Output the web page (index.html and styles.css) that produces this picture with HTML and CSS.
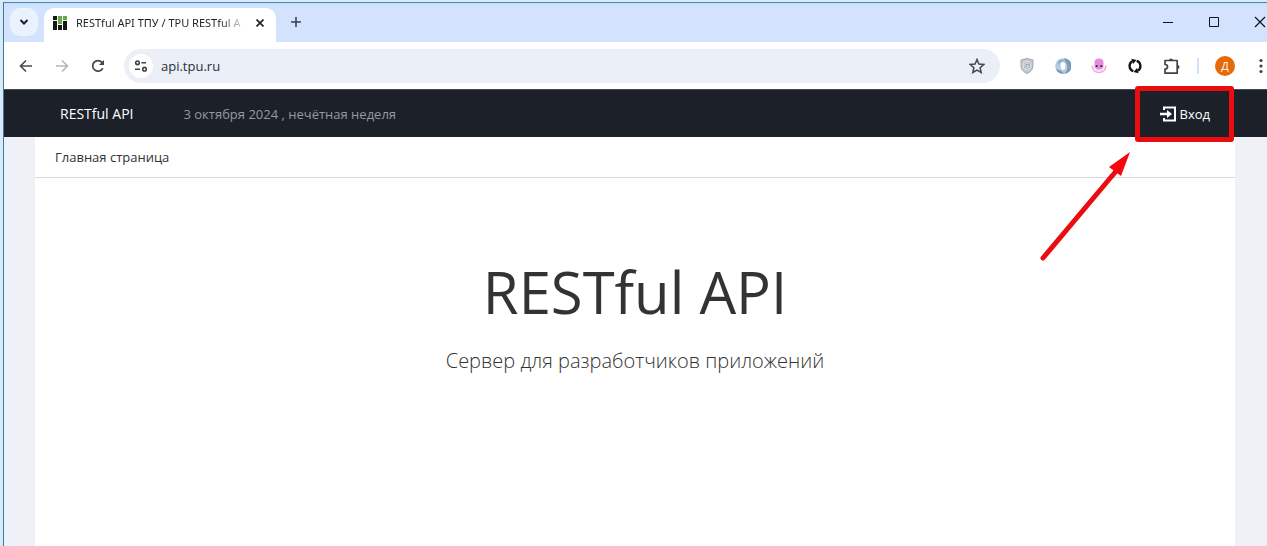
FILE: index.html
```html
<!DOCTYPE html>
<html lang="ru">
<head>
<meta charset="utf-8">
<title>RESTful API ТПУ / TPU RESTful API</title>
<link rel="stylesheet" href="styles.css">
</head>
<body>
<div class="window">
  <div class="tabstrip">
    <button class="tab-search" aria-label="Поиск вкладок">
      <svg width="12" height="12" viewBox="0 0 12 12"><path d="M2.5 4l3.500 3.500L9.500 4" fill="none" stroke="#1c2430" stroke-width="2"/></svg>
    </button>
    <div class="tab">
      <svg class="favicon" width="14" height="14" viewBox="0 0 14 14"><path fill="#151a17" d="M0 5h4v9H0zM5 9h4v5H5zM10 5h4v9h-4zM0 0h4v4H0z"/><path fill="#68a848" d="M5 0h4v8H5zM10 0h4v4h-4z"/></svg>
      <span class="tab-title">RESTful API ТПУ / TPU RESTful A</span>
      <button class="tab-close" aria-label="Закрыть вкладку">
        <svg width="8" height="8" viewBox="0 0 8 8"><path d="M.5.5l7 7M7.500.5l-7 7" stroke="#1f2328" stroke-width="1.700"/></svg>
      </button>
    </div>
    <button class="new-tab" aria-label="Новая вкладка">
      <svg width="10" height="10" viewBox="0 0 10 10"><path d="M5 0v10M0 5h10" stroke="#3b4454" stroke-width="1.600"/></svg>
    </button>
    <div class="window-controls">
      <button aria-label="Свернуть"><svg width="12" height="12" viewBox="0 0 12 12"><path d="M1 6.500h10" stroke="#10131c"/></svg></button>
      <button aria-label="Развернуть"><svg width="12" height="12" viewBox="0 0 12 12"><path d="M1.500 1.500h9v9h-9z" fill="none" stroke="#10131c"/></svg></button>
      <button aria-label="Закрыть"><svg width="12" height="12" viewBox="0 0 12 12"><path d="M1 1l10 10M11 1L1 11" stroke="#10131c" stroke-width="1.200"/></svg></button>
    </div>
  </div>

  <div class="toolbar">
    <div class="nav">
      <button aria-label="Назад"><svg width="14" height="14" viewBox="0 0 14 14"><path d="M13 7H2M7 1.500L1.500 7 7 12.500" fill="none" stroke="#45494e" stroke-width="1.600"/></svg></button>
      <button aria-label="Вперёд" disabled><svg width="14" height="14" viewBox="0 0 14 14"><path d="M1 7h11M7 1.500L12.500 7 7 12.500" fill="none" stroke="#b4b6b9" stroke-width="1.600"/></svg></button>
      <button aria-label="Обновить"><svg width="14" height="14" viewBox="0 0 14 14"><path d="M11.800 9.200A5.300 5.300 0 1 1 11 3.400L12.300 5" fill="none" stroke="#45494e" stroke-width="1.700"/><path d="M13 1v5H8z" fill="#45494e"/></svg></button>
    </div>
    <div class="omnibox">
      <button class="site-info" aria-label="Сведения о сайте">
        <svg width="14" height="12" viewBox="0 0 14 12"><g fill="none" stroke="#3f4347" stroke-width="1.600"><circle cx="3.500" cy="2.800" r="1.800"/><path d="M7.500 2.800H12M1 9.200h5"/><circle cx="10.500" cy="9.200" r="1.800"/></g></svg>
      </button>
      <input class="address" type="text" value="api.tpu.ru" aria-label="Адрес">
      <button class="star" aria-label="Добавить в закладки">
        <svg width="16" height="16" viewBox="0 0 16 16"><path d="M8 1.500l1.900 4.600 4.900.4-3.700 3.200 1.100 4.800L8 12l-4.200 2.500 1.100-4.800-3.700-3.200 4.900-.4z" fill="none" stroke="#45494e" stroke-width="1.500"/></svg>
      </button>
    </div>
    <div class="extensions">
      <button aria-label="Защита"><svg width="16" height="16" viewBox="0 0 16 16"><path d="M8 .5l6 1.500v5.500c0 4-2.500 6.500-6 8-3.500-1.500-6-4-6-8V2z" fill="#c3c8ce" stroke="#a0a7b0"/><circle cx="8" cy="7.500" r="4" fill="#a3abb4" stroke="#e9ecef"/><path d="M9.800 6.200A2.200 2.200 0 1 0 10 8H8" fill="none" stroke="#edf0f2"/></svg></button>
      <button aria-label="Расширение"><svg width="16" height="16" viewBox="0 0 16 16"><circle cx="8" cy="8" r="7.800" fill="#b5cadd"/><path d="M9 .2a7.800 7.800 0 0 1 0 15.600c3.500-3 4-6 3-9S9.500 3 9 .2z" fill="#7b9cba"/><path d="M1 11c2 1 5 1 8 4.700C5 16 2 14 1 11z" fill="#7796b4"/><path d="M3 4c2-2.500 5-3 7-1-3-.5-5 1-6 4z" fill="#8fabc5"/><ellipse cx="8" cy="8" rx="2.400" ry="4" fill="#fff"/></svg></button>
      <button aria-label="Осьминог"><svg width="16" height="16" viewBox="0 0 16 16"><path d="M3.500 4.500Q3.500.5 8 .5t4.500 4V10h-9z" fill="#e58bdc"/><path d="M1.300 7.500c0 4.500 3 7 6.700 7s6.700-2.500 6.700-7" fill="none" stroke="#eba9e4" stroke-width="1.600"/><path d="M4 9h8l-1 3.500H5z" fill="#e58bdc"/><circle cx="5.700" cy="8" r="1.100" fill="#3c1b38"/><circle cx="10.300" cy="8" r="1.100" fill="#3c1b38"/><path d="M4.500 11.300q3.500 2 7 0" fill="none" stroke="#fff" stroke-width=".9"/></svg></button>
      <button aria-label="Синхронизация"><svg width="16" height="16" viewBox="0 0 16 16"><path d="M6.300 13.200A5.500 5.500 0 0 1 5.200 3.300M9.700 2.800a5.500 5.500 0 0 1 1.100 9.900" fill="none" stroke="#111" stroke-width="2.300"/><path d="M4.500.8L9.500 2 6 6zM11.500 15.200L6.500 14 10 10z" fill="#111"/></svg></button>
      <button aria-label="Расширения"><svg width="18" height="18" viewBox="0 0 18 18"><path d="M2 3.500h12.200v12.700H2V12c3.400 0 3.400-4.500 0-4.500z" fill="none" stroke="#3f4347" stroke-width="1.700" stroke-linejoin="round"/><path d="M6 3.500a2 2 0 0 1 4 0zM14.500 8a2 2 0 0 1 0 4z" fill="#3f4347"/></svg></button>
    </div>
    <span class="divider"></span>
    <button class="avatar" aria-label="Профиль">Д</button>
    <button class="menu" aria-label="Меню"><svg width="4" height="16" viewBox="0 0 4 16"><g fill="#3f4347"><circle cx="2" cy="2.500" r="1.600"/><circle cx="2" cy="8" r="1.600"/><circle cx="2" cy="13.500" r="1.600"/></g></svg></button>
  </div>

  <header class="site-header">
    <a class="brand" href="#">RESTful API</a>
    <span class="date">3 октября 2024 , нечётная неделя</span>
    <a class="login" href="#">
      <svg width="16" height="16" viewBox="0 0 16 16"><path d="M4 4V1.500h11v13H4V12" fill="none" stroke="#fff" stroke-width="2"/><path d="M0 6.700h7V4l5 4-5 4V9.300H0z" fill="#fff"/></svg>
      <span>Вход</span>
      <svg class="arrow" width="96" height="114" viewBox="0 0 96 114"><path d="M5 109L79 21" stroke="#eb0c10" stroke-width="5" stroke-linecap="round"/><path d="M92 3L71 18l12 9z" fill="#f5080c"/></svg>
    </a>
  </header>

  <div class="page">
    <main class="content">
      <nav class="breadcrumb"><a href="#">Главная страница</a></nav>
      <section class="hero">
        <h1>RESTful API</h1>
        <p>Сервер для разработчиков приложений</p>
      </section>
    </main>
  </div>
</div>
</body>
</html>
```
FILE: styles.css
```css
* {
  box-sizing: border-box;
}

body {
  margin: 0;
  min-height: 100vh;
  display: flex;
  padding: 2px 0 0 3px;
  background: #d9eaf8;
  font-family: "Open Sans", "Noto Sans", sans-serif;
  font-size: 13px;
  overflow: hidden;
}

button {
  display: flex;
  align-items: center;
  justify-content: center;
  margin: 0;
  padding: 0;
  border: 0;
  background: none;
  font: inherit;
}

svg {
  display: block;
  flex: none;
}

a {
  color: inherit;
  text-decoration: none;
}

.window {
  flex: 1;
  min-width: 0;
  display: flex;
  flex-direction: column;
  border-top: 1px solid #4c86aa;
  border-left: 1px solid #3f7893;
  background: #fff;
}

.tabstrip {
  display: flex;
  height: 39px;
  padding: 5px 0 0 6px;
  background: linear-gradient(#bfe2fb 0, #d3e3fd 4px);
  overflow: hidden;
}

.tab-search {
  width: 28px;
  height: 28px;
  border-radius: 10px;
  background: #eaf2fe;
}

.tab {
  display: flex;
  align-items: center;
  width: 232px;
  margin-left: 6px;
  padding: 0 12px 4px 9px;
  border-radius: 10px 10px 0 0;
  background: #fff;
}

.tab-title {
  flex: 1;
  min-width: 0;
  margin: 0 10px 0 9px;
  white-space: nowrap;
  font-family: "Noto Sans", "Open Sans", sans-serif;
  font-size: 11px;
  line-height: 16px;
  color: #1f2328;
  mask-image: linear-gradient(to right, #000 85%, transparent);
}

.new-tab {
  width: 28px;
  height: 28px;
  margin-left: 6px;
}

.window-controls {
  display: flex;
  gap: 34px;
  height: 28px;
  margin-left: auto;
  padding-right: 1px;
}

.toolbar {
  display: flex;
  align-items: center;
  height: 48px;
  padding-right: 4px;
  border-bottom: 1px solid #454c55;
}

.nav {
  display: flex;
  gap: 22px;
  padding: 0 19px 0 15px;
}

.omnibox {
  flex: 1;
  min-width: 0;
  display: flex;
  align-items: center;
  height: 34px;
  padding: 0 15px 0 5px;
  border-radius: 17px;
  background: #ebeff8;
}

.site-info {
  width: 24px;
  height: 24px;
  border-radius: 12px;
  background: #fff;
}

.address {
  flex: 1;
  min-width: 0;
  padding: 0 8px;
  border: 0;
  outline: 0;
  background: none;
  font: 13px/20px "Open Sans", "Noto Sans", sans-serif;
  color: #2b2e33;
}

.extensions {
  display: flex;
  align-items: center;
  gap: 20px;
  margin-left: 19px;
}

.divider {
  width: 2px;
  height: 16px;
  margin-left: 16px;
  background: #d0e1f8;
}

.avatar {
  width: 20px;
  height: 20px;
  margin: 0 24px 0 16px;
  border-radius: 50%;
  background: #e66a05;
  color: #fff;
  font-size: 11px;
  line-height: 20px;
}

.site-header {
  display: flex;
  align-items: center;
  height: 47px;
  padding: 0 33px 0 56px;
  background: #1c2129;
}

.brand {
  font-size: 14px;
  font-weight: 500;
  color: #fff;
}

.date {
  margin-left: 50px;
  color: #959a9f;
}

.login {
  position: relative;
  display: flex;
  align-items: center;
  gap: 4px;
  height: 56px;
  margin-left: auto;
  padding: 0 19px 0 20px;
  border: 5px solid #eb0c10;
  border-radius: 3px;
  color: #fff;
}

.arrow {
  position: absolute;
  top: 58px;
  right: 95px;
}

.page {
  flex: 1;
  padding: 0 32px 0 31px;
  background: linear-gradient(to right, #eaf3fb 0, #eff1f7 12px);
}

.content {
  height: 100%;
  background: #fff;
}

.breadcrumb {
  padding: 10px 20px;
  border-bottom: 1px solid #d8d8da;
  line-height: 20px;
  color: #303236;
}

.hero {
  padding: 79px 20px 0;
  text-align: center;
  color: #333;
}

.hero h1 {
  margin: 0;
  font-size: 58px;
  font-weight: 400;
  line-height: 70px;
}

.hero p {
  margin: 20px 0 0;
  font-size: 20px;
  font-weight: 300;
  line-height: 28px;
}
```
